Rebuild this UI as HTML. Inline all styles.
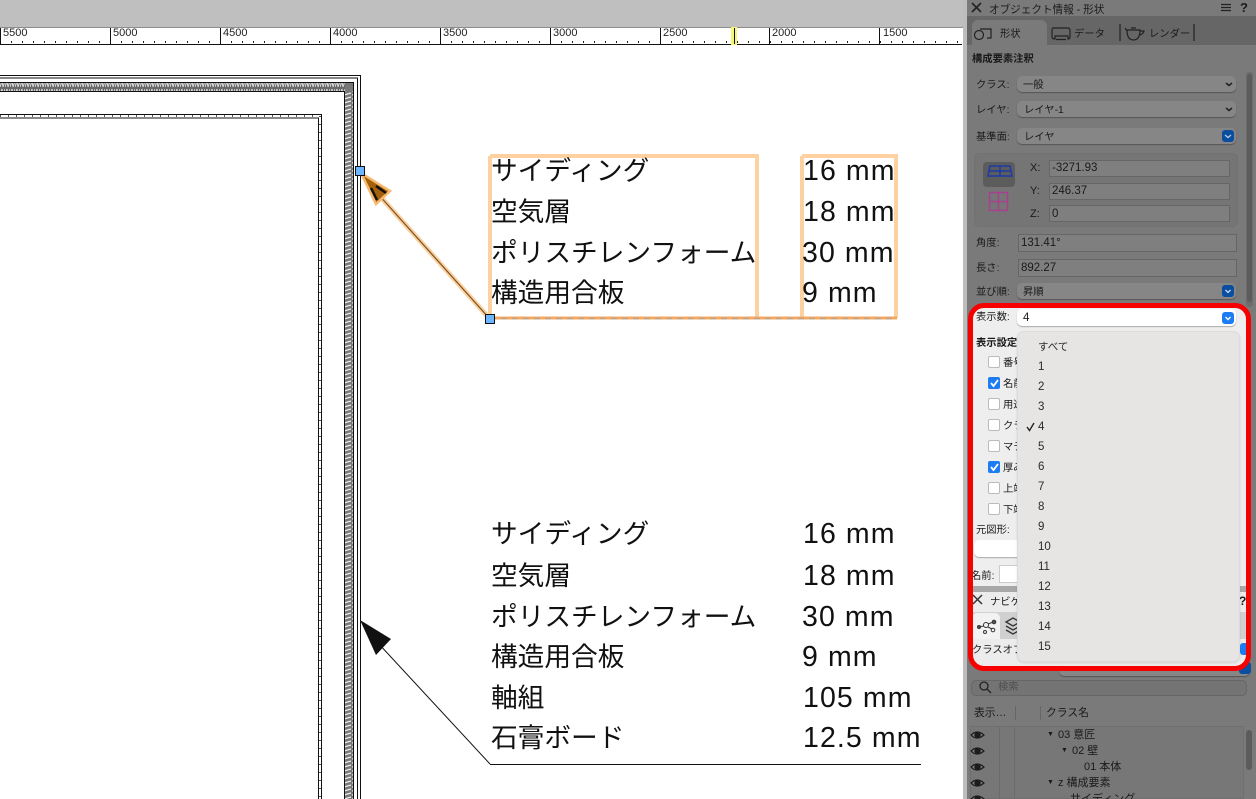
<!DOCTYPE html>
<html lang="ja"><head><meta charset="utf-8"><title>オブジェクト情報</title>
<style>
html,body{margin:0;padding:0;background:#fff}
#p{position:relative;width:1256px;height:799px;overflow:hidden;background:#fff;font-family:"Liberation Sans","Noto Sans CJK JP",sans-serif}
#p div,#p span,#p svg{position:absolute}
.t{white-space:nowrap;line-height:16px;height:16px;font-size:10.3px;color:#1a1a1a;margin-top:2px}
.l{white-space:nowrap;line-height:16px;height:16px;font-size:11.5px;color:#1a1a1a}
.b{font-size:26.7px;line-height:36px;height:36px;margin-top:1px;color:#111;white-space:nowrap;font-family:"Liberation Sans","Noto Sans CJK JP",sans-serif}
.n{font-size:28.5px;line-height:36px;height:36px;color:#111;white-space:nowrap;letter-spacing:1.1px;font-family:"Liberation Sans",sans-serif}
.r{font-size:11px;line-height:12px;color:#222;top:27px}
.pop{border-radius:5px;background:#868686;box-shadow:0 1px 1px #555}
.fld{background:#7f7f7f;border:1px solid #666;box-sizing:border-box}
.btn{width:12px;height:12px;border-radius:3px;background:#0a4ea0}
.m{font-size:11.5px;color:#2a2a2a;left:21px;line-height:16px;height:16px;margin-top:1px}
.cb{left:18px;width:10px;height:10px;border:1px solid #bbb;border-radius:2px;background:#fff}
.cb.on{background:#1d7cf2;border-color:#1d7cf2}
</style></head><body><div id="p">

<div style="left:0;top:0;width:963px;height:27px;background:#bfbfbf"></div>
<div style="left:0;top:27px;width:963px;height:1px;background:#8c8c8c"></div>
<div style="left:963px;top:0;width:4px;height:799px;background:#bdbdbd"></div>

<svg width="963" height="799" style="left:0;top:0">
<defs>
<pattern id="tk" x="0" y="0" width="11" height="10" patternUnits="userSpaceOnUse"><rect x="0" y="0" width="1" height="3" fill="#222"/></pattern>
<pattern id="hh" width="5" height="8" patternUnits="userSpaceOnUse"><rect width="5" height="8" fill="#666"/><path d="M0 7L2 1L3 7L5 1" stroke="#ddd" stroke-width="1" fill="none"/></pattern>
<pattern id="hv" width="8" height="4" patternUnits="userSpaceOnUse"><rect width="8" height="4" fill="#777"/><path d="M0 3L7 1" stroke="#eee" stroke-width="1.2" fill="none"/></pattern>
</defs>
<rect x="0" y="41" width="962" height="3" fill="url(#tk)"/>
<rect x="0" y="44" width="962" height="1" fill="#111"/>
<path d="M.5 28V44M110.5 28V44M220.5 28V44M330.5 28V44M440.5 28V44M550.5 28V44M660.5 28V44M769.5 28V44M879.5 28V44" stroke="#111"/>
<rect x="731" y="27" width="6" height="18" fill="#f8f47a"/><rect x="734" y="28" width="1" height="16" fill="#111"/>

<!-- wall -->
<path d="M0 75.5H360.5V799M0 78H357.5V799M0 82.5H353.5V799M0 91.5H344.5V799" stroke="#111" fill="none"/>
<rect x="0" y="83" width="353" height="8" fill="url(#hh)"/>
<rect x="345" y="91" width="8" height="708" fill="url(#hv)"/>
<rect x="345" y="83" width="8" height="8" fill="#777"/>
<path d="M0 114.5H321.5V799M0 118H318.5V799" stroke="#111" fill="none"/>
<path d="M0 116H320V799" stroke="#555" stroke-dasharray="1 7" stroke-width="2" fill="none"/>

<!-- selection -->
<path d="M490 156H757V318M490 156V318" stroke="#fdd2a0" stroke-width="4" fill="none"/>
<path d="M802 156H896V318M802 156V318" stroke="#fdd2a0" stroke-width="4" fill="none"/>
<path d="M490 318H897" stroke="#f4a860" stroke-width="3"/>
<path d="M490 318.5H897" stroke="#b8a48e" stroke-width="1.5" stroke-dasharray="6 5"/>
<path d="M489 318L378 194" stroke="#fad0a0" stroke-width="5"/>
<path d="M489 318L378 194" stroke="#7a5020" stroke-width="1.2"/>
<path d="M361 173L390 191L376 204Z" fill="#a4610a" stroke="#f6b970" stroke-width="2.5"/>
<path d="M371 188L377 200M376 186L386 193" stroke="#111" stroke-width="2.500" fill="none"/>
<rect x="355.5" y="166.5" width="9" height="9" fill="#6db5ff" stroke="#111"/>
<rect x="485.5" y="314.5" width="9" height="9" fill="#6db5ff" stroke="#111"/>

<!-- lower leader -->
<path d="M490 764L378 643M490 764.5H921" stroke="#111" fill="none"/>
<path d="M360 620L391 639L376 655Z" fill="#111"/>
</svg>

<span class="r" style="left:3px">5500</span><span class="r" style="left:113px">5000</span><span class="r" style="left:223px">4500</span><span class="r" style="left:333px">4000</span><span class="r" style="left:443px">3500</span><span class="r" style="left:553px">3000</span><span class="r" style="left:663px">2500</span><span class="r" style="left:772px">2000</span><span class="r" style="left:883px">1500</span>

<span class="b" style="left:491px;top:152px">サイディング</span><span class="n" style="left:803px;top:153px">16 mm</span>
<span class="b" style="left:491px;top:193px">空気層</span><span class="n" style="left:803px;top:194px">18 mm</span>
<span class="b" style="left:491px;top:234px">ポリスチレンフォーム</span><span class="n" style="left:802px;top:235px">30 mm</span>
<span class="b" style="left:491px;top:274px">構造用合板</span><span class="n" style="left:802px;top:275px">9 mm</span>

<span class="b" style="left:491px;top:515px">サイディング</span><span class="n" style="left:803px;top:516px">16 mm</span>
<span class="b" style="left:491px;top:557px">空気層</span><span class="n" style="left:803px;top:558px">18 mm</span>
<span class="b" style="left:491px;top:598px">ポリスチレンフォーム</span><span class="n" style="left:802px;top:599px">30 mm</span>
<span class="b" style="left:491px;top:638px">構造用合板</span><span class="n" style="left:802px;top:639px">9 mm</span>
<span class="b" style="left:491px;top:679px">軸組</span><span class="n" style="left:803px;top:680px">105 mm</span>
<span class="b" style="left:491px;top:719px">石膏ボード</span><span class="n" style="left:803px;top:720px">12.5 mm</span>

<!-- dark panel -->
<div style="left:967px;top:0;width:289px;height:799px;background:#7a7a7a"></div>
<div style="left:967px;top:16px;width:289px;height:29px;background:#666"></div>
<div style="left:972px;top:20px;width:75px;height:25px;background:#7a7a7a;border-radius:6px 6px 0 0"></div>
<div style="left:1246px;top:72px;width:7px;height:235px;background:#6c6c6c;border-radius:3px"></div>
<div style="left:1247px;top:74px;width:5px;height:228px;background:#5c5c5c;border-radius:3px"></div>

<svg width="289" height="300" style="left:967px;top:0" fill="none" stroke="#222" stroke-width="1.2">
<path d="M5 3L14 12M14 3L5 12" stroke-width="1.6"/>
<path d="M254 4.500H264M254 7.500H264M254 10.500H264" stroke-width="1.2"/>
<circle cx="12" cy="35" r="4.500"/><path d="M13 29H24V38H20"/>
<path d="M86 28H101Q103 28 103 31V37Q103 39 101 39V36H88V39Q85 39 85 37V31Q85 28 86 28ZM89 39.500H99"/>
<path d="M153 24V41M227 24V41"/>
<path d="M160 30H173C173 36 171 40 166.500 40C162 40 160 36 160 30ZM173 31H177C176 34 174 35 172 35M164 28H169M158 28L160 31"/>
</svg>

<span class="t" style="left:989px;top:0;font-size:10.6px">オブジェクト情報 - 形状</span>
<span class="t" style="left:1240px;top:-2px;font-size:13px;font-weight:bold">?</span>
<span class="t" style="left:1000px;top:25px">形状</span>
<span class="t" style="left:1074px;top:25px">データ</span>
<span class="t" style="left:1149px;top:25px">レンダー</span>
<span class="t" style="left:972px;top:50px;font-weight:bold">構成要素注釈</span>

<span class="t" style="left:976px;top:76px">クラス:</span><div class="pop" style="left:1017px;top:76px;width:219px;height:16px"></div><span class="t" style="left:1023px;top:76px">一般</span>
<span class="t" style="left:976px;top:101px">レイヤ:</span><div class="pop" style="left:1017px;top:101px;width:219px;height:16px"></div><span class="t" style="left:1024px;top:101px">レイヤ-1</span>
<span class="t" style="left:976px;top:128px">基準面:</span><div class="pop" style="left:1017px;top:128px;width:219px;height:16px"></div><span class="t" style="left:1024px;top:128px">レイヤ</span>
<div class="btn" style="left:1222px;top:130px"></div>
<svg width="250" height="240" style="left:1000px;top:75px" fill="none"><path d="M226 8L229 10.500L232 8M226 33L229 35.500L232 33" stroke="#222" stroke-width="1.500"/><path d="M225 60L228 62.500L231 60" stroke="#bcd" stroke-width="1.300"/></svg>

<div style="left:974px;top:153px;width:264px;height:74px;border-radius:5px;background:#757575;border:1px solid #717171;box-sizing:border-box"></div>
<div style="left:983px;top:162px;width:32px;height:25px;border-radius:4px;background:#5c5c5c"></div>
<svg width="40" height="60" style="left:980px;top:160px" fill="none"><path d="M10 6H30L32 16H8ZM9 11H31M20 6V16" stroke="#1c3aa8" stroke-width="1.500"/><rect x="9.500" y="32.500" width="18" height="18" stroke="#a8408f" stroke-width="1.500"/><path d="M18.500 32V51M9 41.500H28" stroke="#a8408f" stroke-width="1.500"/></svg>
<span class="l" style="left:1030px;top:160px;font-size:11px">X:</span><div class="fld" style="left:1049px;top:160px;width:181px;height:17px"></div><span class="l" style="left:1052px;top:160px">-3271.93</span>
<span class="l" style="left:1030px;top:183px;font-size:11px">Y:</span><div class="fld" style="left:1049px;top:183px;width:181px;height:17px"></div><span class="l" style="left:1052px;top:183px">246.37</span>
<span class="l" style="left:1030px;top:206px;font-size:11px">Z:</span><div class="fld" style="left:1049px;top:205px;width:181px;height:17px"></div><span class="l" style="left:1052px;top:206px">0</span>

<span class="t" style="left:976px;top:234px">角度:</span><div class="fld" style="left:1018px;top:234px;width:219px;height:18px"></div><span class="l" style="left:1021px;top:235px">131.41°</span>
<span class="t" style="left:976px;top:259px">長さ:</span><div class="fld" style="left:1018px;top:259px;width:219px;height:18px"></div><span class="l" style="left:1021px;top:260px">892.27</span>
<span class="t" style="left:976px;top:283px">並び順:</span><div class="pop" style="left:1017px;top:283px;width:219px;height:16px"></div><span class="t" style="left:1023px;top:283px">昇順</span>
<div class="btn" style="left:1222px;top:285px"></div>
<svg width="20" height="20" style="left:1222px;top:285px" fill="none"><path d="M3.500 5L6 7.500L8.500 5" stroke="#cde" stroke-width="1.300"/></svg>

<!-- lower dark -->
<div class="pop" style="left:1059px;top:660px;width:191px;height:16px"></div>
<span class="t" style="left:1072px;top:657px">すべてのクラス</span>
<span class="t" style="left:976px;top:657px">フィルタ:</span>
<div class="btn" style="left:1239px;top:662px"></div>
<div style="left:971px;top:680px;width:276px;height:16px;border:1px solid #666;border-radius:5px;background:#747474;box-sizing:border-box"></div>
<svg width="14" height="14" style="left:978px;top:680px" fill="none" stroke="#222" stroke-width="1.300"><circle cx="6" cy="6" r="4"/><path d="M9 9L13 13"/></svg>
<span class="t" style="left:998px;top:678px;color:#4e4e4e">検索</span>
<span class="t" style="left:974px;top:703px;font-size:10.800px">表示…</span>
<span class="t" style="left:1046px;top:703px;font-size:10.800px">クラス名</span>
<div style="left:1015px;top:706px;width:1px;height:14px;background:#666"></div>
<div style="left:1040px;top:706px;width:1px;height:14px;background:#666"></div>
<div style="left:970px;top:726px;width:274px;height:73px;border:1px solid #707070;background:#777;box-sizing:border-box"></div>
<div style="left:999px;top:727px;width:1px;height:72px;background:#6c6c6c"></div>
<div style="left:1014px;top:727px;width:1px;height:72px;background:#6c6c6c"></div>
<div style="left:1246px;top:730px;width:6px;height:40px;background:#5c5c5c;border-radius:3px"></div>
<svg width="20" height="80" style="left:970px;top:726px" fill="none" stroke="#1c1c1c" stroke-width="1.200">
<g><path d="M1 9Q7 3 14 9Q7 15 1 9Z"/><circle cx="7.500" cy="9" r="2.500" fill="#1c1c1c"/></g>
<g transform="translate(0,16)"><path d="M1 9Q7 3 14 9Q7 15 1 9Z"/><circle cx="7.500" cy="9" r="2.500" fill="#1c1c1c"/></g>
<g transform="translate(0,32)"><path d="M1 9Q7 3 14 9Q7 15 1 9Z"/><circle cx="7.500" cy="9" r="2.500" fill="#1c1c1c"/></g>
<g transform="translate(0,48)"><path d="M1 9Q7 3 14 9Q7 15 1 9Z"/><circle cx="7.500" cy="9" r="2.500" fill="#1c1c1c"/></g>
<g transform="translate(0,64)"><path d="M1 9Q7 3 14 9Q7 15 1 9Z"/><circle cx="7.500" cy="9" r="2.500" fill="#1c1c1c"/></g>
</svg>
<span class="t" style="left:1047px;top:725px;font-size:7px">▼</span><span class="t" style="left:1058px;top:725px;font-size:11px">03 意匠</span>
<span class="t" style="left:1061px;top:741px;font-size:7px">▼</span><span class="t" style="left:1072px;top:741px;font-size:11px">02 壁</span>
<span class="t" style="left:1084px;top:757px;font-size:11px">01 本体</span>
<span class="t" style="left:1047px;top:773px;font-size:7px">▼</span><span class="t" style="left:1058px;top:773px;font-size:11px">z 構成要素</span>
<span class="t" style="left:1070px;top:789px;font-size:11px">サイディング</span>

<!-- highlight -->
<div style="left:970px;top:305px;width:279px;height:363px;border-radius:13px;background:#ececec;overflow:hidden">
  <div style="left:0;top:0;width:279px;height:282px;background:#eeeeee"></div>
  <span class="t" style="left:6px;top:3px">表示数:</span>
  <div style="left:47px;top:4px;width:219px;height:17px;background:#fff;border-radius:5px;box-shadow:0 1px 1px #aaa"></div>
  <span class="l" style="left:53px;top:5px">4</span>
  <div class="btn" style="left:252px;top:7px;background:#1d7cf2"></div>
  <svg width="12" height="12" style="left:252px;top:7px" fill="none"><path d="M3.500 5L6 7.500L8.500 5" stroke="#fff" stroke-width="1.400"/></svg>
  <span class="t" style="left:6px;top:29px;font-weight:bold">表示設定</span>
  <div class="cb" style="top:51px"></div><span class="t" style="left:33px;top:49px">番号</span>
  <div class="cb on" style="top:72px"></div><span class="t" style="left:33px;top:70px">名前</span>
  <div class="cb" style="top:93px"></div><span class="t" style="left:33px;top:91px">用途</span>
  <div class="cb" style="top:114px"></div><span class="t" style="left:33px;top:112px">クラス</span>
  <div class="cb" style="top:135px"></div><span class="t" style="left:33px;top:133px">マテリアル</span>
  <div class="cb on" style="top:156px"></div><span class="t" style="left:33px;top:154px">厚み</span>
  <div class="cb" style="top:177px"></div><span class="t" style="left:33px;top:175px">上端</span>
  <div class="cb" style="top:198px"></div><span class="t" style="left:33px;top:196px">下端</span>
  <svg width="30" height="180" style="left:16px;top:70px" fill="none"><path d="M5 8L7.500 11L12 5M5 92L7.500 95L12 89" stroke="#fff" stroke-width="1.800"/></svg>
  <span class="t" style="left:6px;top:216px">元図形:</span>
  <div style="left:4px;top:235px;width:240px;height:17px;background:#fff;border-radius:5px;box-shadow:0 1px 1px #aaa"></div>
  <span class="t" style="left:1px;top:262px">名前:</span>
  <div style="left:29px;top:260px;width:240px;height:18px;background:#fff;border:1px solid #ccc;box-sizing:border-box"></div>
  <div style="left:0;top:281px;width:279px;height:6px;background:#a8a8a8"></div>
  <div style="left:0;top:287px;width:279px;height:76px;background:#ececec"></div>
  <svg width="14" height="14" style="left:2px;top:289px" fill="none" stroke="#333" stroke-width="1.500"><path d="M1 1L10 10M10 1L1 10"/></svg>
  <span class="t" style="left:20px;top:288px">ナビゲーション</span>
  <span class="t" style="left:269px;top:286px;font-size:12px;font-weight:bold">?</span>
  <div style="left:0;top:307px;width:279px;height:27px;background:#d0d0d0"></div>
  <div style="left:2px;top:308px;width:28px;height:26px;background:#f2f2f2;border-radius:5px 5px 0 0"></div>
  <svg width="50" height="26" style="left:4px;top:308px" fill="none" stroke="#333" stroke-width="1"><circle cx="12" cy="12" r="2.500"/><circle cx="20" cy="9" r="1.800" fill="#555"/><circle cx="19" cy="17" r="1.800"/><circle cx="5" cy="14" r="1.500" fill="#555"/><circle cx="11" cy="19" r="1.500"/><path d="M7 13.500L10 13M14 11L18 9.500M14 14L18 16"/><path d="M32 9L39 5L46 9L39 13ZM32 13L39 17L46 13M32 17L39 21L46 17" stroke-width="1.300"/></svg>
  <span class="t" style="left:2px;top:336px">クラスオプション</span>
  <div class="btn" style="left:270px;top:338px;background:#1d7cf2"></div>
</div>

<!-- dropdown -->
<div style="left:1017px;top:331px;width:223px;height:331px;background:#e6e5e3;border:1px solid #dcdcdc;border-radius:7px;box-sizing:border-box;box-shadow:0 1px 2px rgba(0,0,0,.12)">
  <span class="m" style="top:6px;left:20px;font-size:10.500px">すべて</span>
  <span class="m" style="top:26px;left:20px">1</span>
  <span class="m" style="top:46px;left:20px">2</span>
  <span class="m" style="top:66px;left:20px">3</span>
  <span class="m" style="top:86px;left:20px">4</span>
  <span class="m" style="top:106px;left:20px">5</span>
  <span class="m" style="top:126px;left:20px">6</span>
  <span class="m" style="top:146px;left:20px">7</span>
  <span class="m" style="top:166px;left:20px">8</span>
  <span class="m" style="top:186px;left:20px">9</span>
  <span class="m" style="top:206px;left:20px">10</span>
  <span class="m" style="top:226px;left:20px">11</span>
  <span class="m" style="top:246px;left:20px">12</span>
  <span class="m" style="top:266px;left:20px">13</span>
  <span class="m" style="top:286px;left:20px">14</span>
  <span class="m" style="top:306px;left:20px">15</span>
  <svg width="12" height="12" style="left:8px;top:89px" fill="none"><path d="M1 6L3.500 9.500L8 2" stroke="#222" stroke-width="1.400"/></svg>
</div>

<!-- red outline -->
<div style="left:967.500px;top:302.500px;width:283px;height:368px;border:5px solid #f60000;border-radius:16px;box-sizing:border-box"></div>

</div></body></html>
